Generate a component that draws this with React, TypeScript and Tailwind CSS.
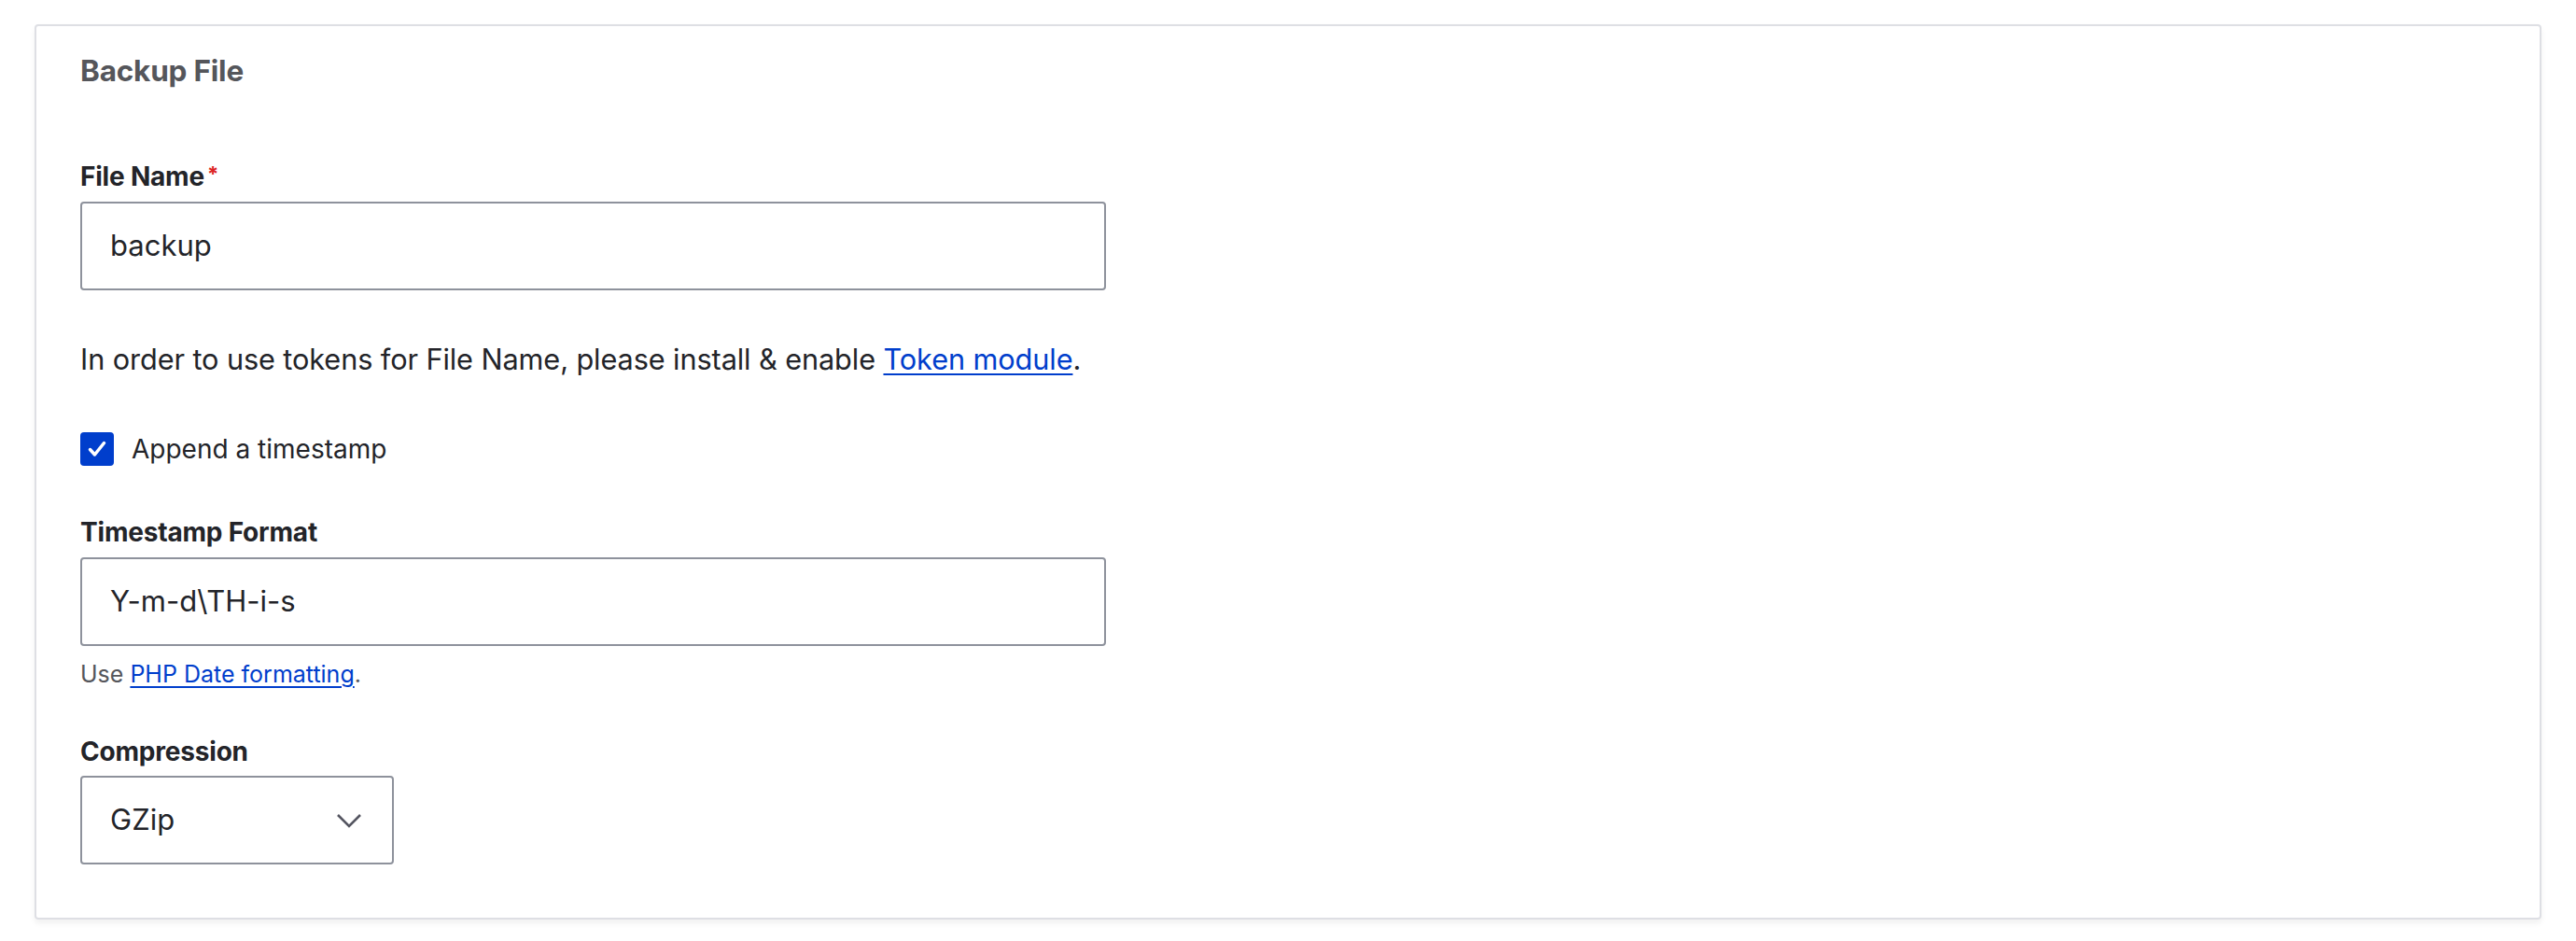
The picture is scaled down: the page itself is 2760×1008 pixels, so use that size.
const font = { fontFamily: "Inter, 'Noto Sans', sans-serif" };

const Label: React.FC<{ text: string; required?: boolean }> = ({ text, required }) => (
  <div className="flex items-start h-[36px] leading-[36px] text-[28px] font-bold text-[#232429] tracking-[-0.2px]">
    {text}
    {required && <span className="ml-[3px] text-[#dc2323] text-[22px] leading-[30px]">*</span>}
  </div>
);

const TextInput: React.FC<{ value: string }> = ({ value }) => (
  <div className="mt-[9px] w-[1099px] h-[95px] border-2 border-[#8e929c] rounded-[4px] flex items-center pl-[30px] text-[31px] text-[#232429]">
    {value}
  </div>
);

export default function App() {
  return (
    <div className="w-[2760px] h-[1008px] bg-white" style={font}>
      <div className="pt-[26px] px-[37px]">
        <div className="border-2 border-[#dedfe4] rounded-[4px] shadow-[0_4px_6px_rgba(0,0,0,0.06)] pl-[47px] pt-[28px] pb-[57px] flex flex-col items-start">
          <div className="h-[40px] leading-[40px] text-[31.5px] font-bold text-[#55565b] tracking-[-0.2px]">Backup File</div>

          <div className="mt-[75px]">
            <Label text="File Name" required />
          </div>
          <TextInput value="backup" />

          <p className="mt-[50px] h-[48px] leading-[48px] text-[30.7px] text-[#232429] tracking-[-0.1px]">
            In order to use tokens for File Name, please install &amp; enable{" "}
            <a href="#" className="text-[#003ecc] underline decoration-[2px] underline-offset-[4px]">Token module</a>.
          </p>

          <label className="mt-[54px] flex items-center h-[36px] gap-[19px]">
            <span className="w-[36px] h-[36px] rounded-[4px] bg-[#003ecc] flex items-center justify-center">
              <svg width="22" height="22" viewBox="0 0 22 22" fill="none">
                <path d="M3.5 11.5 L8.5 17 L18.5 4.5" stroke="white" strokeWidth="3.5" strokeLinecap="round" strokeLinejoin="round" />
              </svg>
            </span>
            <span className="text-[28px] text-[#232429] leading-[36px]">Append a timestamp</span>
          </label>

          <div className="mt-[53px]">
            <Label text="Timestamp Format" />
          </div>
          <TextInput value="Y-m-d\TH-i-s" />

          <div className="mt-[13px] h-[34px] leading-[34px] text-[25px] text-[#55565b]">
            Use{" "}
            <a href="#" className="text-[#003ecc] underline decoration-[2px] underline-offset-[4px]">PHP Date formatting</a>.
          </div>

          <div className="mt-[48px]">
            <Label text="Compression" />
          </div>
          <div className="mt-[8px] w-[336px] h-[95px] border-2 border-[#8e929c] rounded-[4px] flex items-center justify-between pl-[30px] pr-[32px] text-[31px] text-[#232429]">
            <span>GZip</span>
            <svg width="28" height="16" viewBox="0 0 28 16" fill="none">
              <path d="M2 2 L14 14 L26 2" stroke="#545560" strokeWidth="2.6" strokeLinejoin="miter" />
            </svg>
          </div>
        </div>
      </div>
    </div>
  );
}
